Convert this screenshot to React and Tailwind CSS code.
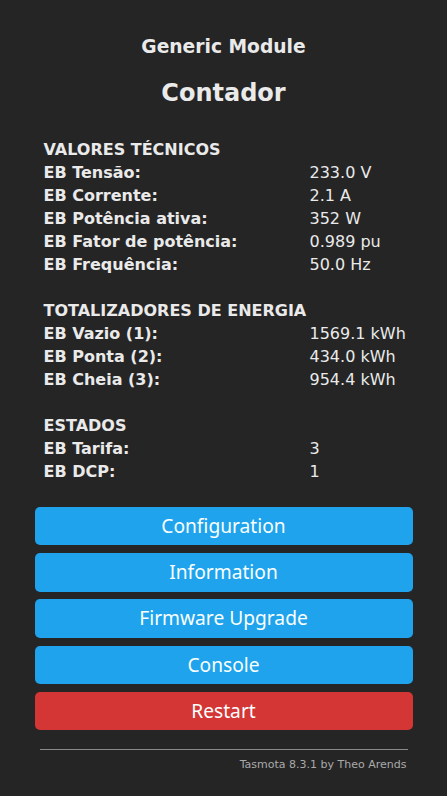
import React from 'react'

const SECTIONS = [
  {
    title: 'VALORES TÉCNICOS',
    rows: [
      ['EB Tensão:', '233.0 V'],
      ['EB Corrente:', '2.1 A'],
      ['EB Potência ativa:', '352 W'],
      ['EB Fator de potência:', '0.989 pu'],
      ['EB Frequência:', '50.0 Hz'],
    ],
  },
  {
    title: 'TOTALIZADORES DE ENERGIA',
    rows: [
      ['EB Vazio (1):', '1569.1 kWh'],
      ['EB Ponta (2):', '434.0 kWh'],
      ['EB Cheia (3):', '954.4 kWh'],
    ],
  },
  {
    title: 'ESTADOS',
    rows: [
      ['EB Tarifa:', '3'],
      ['EB DCP:', '1'],
    ],
  },
]

const BUTTONS = [
  { label: 'Configuration', red: false },
  { label: 'Information', red: false },
  { label: 'Firmware Upgrade', red: false },
  { label: 'Console', red: false },
  { label: 'Restart', red: true },
]

export default function App() {
  return (
    <div className="min-h-[796px] w-full bg-[#252525] text-[#eaeaea] font-['DejaVu_Sans',sans-serif]">
      <div className="mx-auto w-[378px] pt-[36px]">
        <h3 className="h-[22px] text-center text-[18.7px] leading-[22px] font-bold">Generic Module</h3>
        <h2 className="mt-[21px] h-[28px] text-center text-[24px] leading-[28px] font-bold">Contador</h2>

        <div className="mt-[31px] pl-[9px] text-[16px]">
          {SECTIONS.map((s, i) => (
            <div key={s.title} className={i > 0 ? 'mt-[23px]' : ''}>
              <div className="h-[23px] leading-[23px] font-bold">{s.title}</div>
              {s.rows.map(([k, v]) => (
                <div key={k} className="flex h-[23px] leading-[23px]">
                  <span className="w-[266px] font-bold">{k}</span>
                  <span>{v}</span>
                </div>
              ))}
            </div>
          ))}
        </div>

        <div className="mt-[24px] flex flex-col gap-[7.85px]">
          {BUTTONS.map(b => (
            <button
              key={b.label}
              className={`h-[38.4px] w-full rounded-[5px] text-[19.2px] leading-[38.4px] text-[#faffff] font-['Noto_Sans',sans-serif] ${b.red ? 'bg-[#d43535]' : 'bg-[#1fa3ec]'}`}
            >
              {b.label}
            </button>
          ))}
        </div>

        <div className="mx-[5px] mt-[19px] border-t border-[#8a8a8a]" />
        <div className="mr-[6px] mt-[8px] text-right text-[11px] leading-[13px] text-[#aaa]">
          Tasmota 8.3.1 by Theo Arends
        </div>
      </div>
    </div>
  )
}
